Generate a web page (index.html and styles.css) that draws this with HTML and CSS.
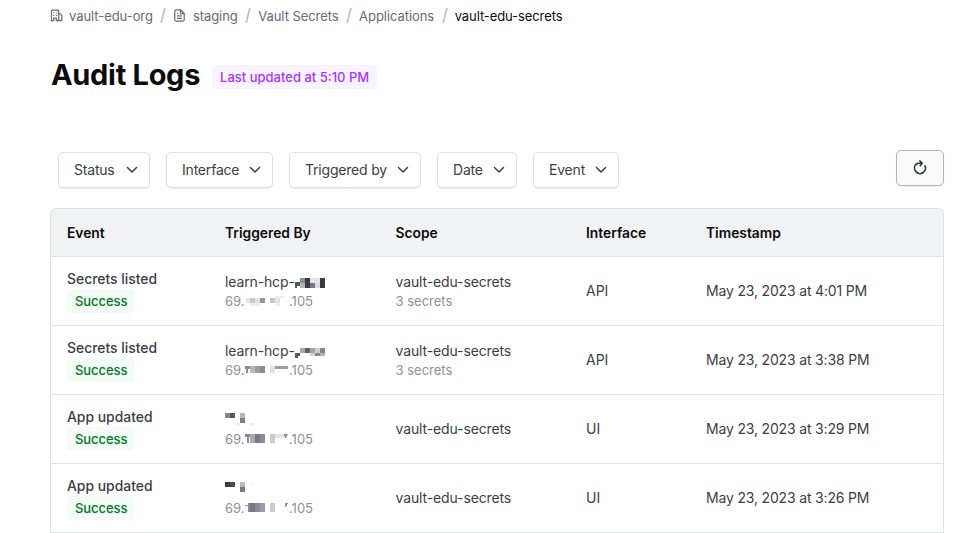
FILE: index.html
```html
<!DOCTYPE html>
<html lang="en">
<head>
<meta charset="utf-8">
<title>Audit Logs</title>
<link rel="stylesheet" href="styles.css">
</head>
<body>
<nav class="crumbs">
  <svg class="crumb-icon" viewBox="0 0 16 16"><path d="M1.8 14.2V2.5Q1.8 1.5 2.8 1.5H9.7Q10.7 1.5 10.7 2.5V14.2M10.7 6H12.5L14.6 8V14.2H10.7M.8 14.2H4.6V11.2H7.8V14.2H10.7M4.5 4V5.2M8 4V5.2M4.5 7.4V8.6M8 7.4V8.6"/></svg>
  <span class="crumb c1">vault-edu-org</span><i class="slash"></i>
  <svg class="crumb-icon" viewBox="0 0 16 16"><path d="M9.5 1.2H3.7Q2.2 1.2 2.2 2.7V13.3Q2.2 14.8 3.7 14.8H12.3Q13.8 14.8 13.8 13.3V5.5ZM9.3 1.5V5.7H13.5M5 5.5H6.5M5 8.5H11M5 11.5H11"/></svg>
  <span class="crumb c2">staging</span><i class="slash"></i>
  <span class="crumb c3">Vault Secrets</span><i class="slash"></i>
  <span class="crumb c4">Applications</span><i class="slash"></i>
  <span class="crumb current">vault-edu-secrets</span>
</nav>
<header class="title"><h1>Audit Logs</h1><span class="badge updated">Last updated at 5:10 PM</span></header>
<div class="toolbar">
  <button class="filter f1">Status<svg viewBox="0 0 12 8"><path d="M1.5 1.5L6 6L10.5 1.5"/></svg></button>
  <button class="filter f2">Interface<svg viewBox="0 0 12 8"><path d="M1.5 1.5L6 6L10.5 1.5"/></svg></button>
  <button class="filter f3">Triggered by<svg viewBox="0 0 12 8"><path d="M1.5 1.5L6 6L10.5 1.5"/></svg></button>
  <button class="filter f4">Date<svg viewBox="0 0 12 8"><path d="M1.5 1.5L6 6L10.5 1.5"/></svg></button>
  <button class="filter f5">Event<svg viewBox="0 0 12 8"><path d="M1.5 1.5L6 6L10.5 1.5"/></svg></button>
  <button class="refresh" aria-label="Refresh"><svg viewBox="0 0 16 16"><path d="M4.1 4.2A5.5 5.5 0 1 0 12.7 5.2M4.1 4.2Q6.2 2.8 9.8 3.2M7.3 .5L10.1 3.2L7.9 6.2"/></svg></button>
</div>
<main class="table">
  <div class="row head"><b>Event</b><b>Triggered By</b><b>Scope</b><b>Interface</b><b>Timestamp</b></div>
  <div class="row">
    <div><p class="event">Secrets listed</p><span class="badge success">Success</span></div>
    <div class="actor"><p class="name">learn-hcp-</p><p class="ip"><span>69.</span><span>.105</span></p>
      <svg class="mosaic m1" viewBox="0 0 110 45"><path fill="#555660" d="M70 17h5v4h-3v2h-2z"/><path fill="#8d8e95" d="M75 13h5v5h-5z"/><path fill="#b5b5bb" d="M75 18h5v5h-5z"/><path fill="#393a44" d="M80 13h5v10h-5zM95 13h5v10h-5z"/><path fill="#e4e4e7" d="M85 13h5v5h-5zM90 13h5v5h-5z"/><path fill="#777880" d="M85 18h5v5h-5z"/><path fill="#dcdce0" d="M90 18h5v5h-5z"/><path fill="#e1e1e6" d="M21 33h5v5h-5zM30 33h5v5h-5zM50 33h5v5h-5z"/><path fill="#c7c7ce" d="M25 33h5v5h-5zM45 33h5v5h-5z"/><path fill="#9697a3" d="M35 33h5v5h-5z"/><path fill="#eeeef2" d="M50 31h10v2h-10zM25 38h10v3h-10zM50 38h5v3h-5z"/></svg></div>
    <div><p class="scope">vault-edu-secrets</p><p class="count">3 secrets</p></div><div class="api">API</div><div class="time">May 23, 2023 at 4:01 PM</div>
  </div>
  <div class="row">
    <div><p class="event">Secrets listed</p><span class="badge success">Success</span></div>
    <div class="actor"><p class="name">learn-hcp-</p><p class="ip"><span>69.</span><span>.105</span></p>
      <svg class="mosaic m2" viewBox="0 0 110 45"><path fill="#565660" d="M70 18h5v3h-2v2h-3z"/><path fill="#a6a7ad" d="M75 13h5v5h-5zM85 13h5v5h-5z"/><path fill="#61626b" d="M80 13h5v5h-5z"/><path fill="#cfcfd5" d="M85 18h5v3h-5zM90 13h5v5h-5z"/><path fill="#86878e" d="M95 13h5v5h-5zM90 18h5v3h-5z"/><path fill="#b4b5bc" d="M95 18h5v3h-5z"/><path fill="#898b98" d="M20 31h5v3h-2v4h-2v-4h-1zM35 31h5v7h-5z"/><path fill="#b6b6c0" d="M25 31h5v7h-5z"/><path fill="#9b9ca7" d="M30 31h5v7h-5zM50 31h13v3h-13z"/><path fill="#dfdfe5" d="M45 31h5v7h-5z"/></svg></div>
    <div><p class="scope">vault-edu-secrets</p><p class="count">3 secrets</p></div><div class="api">API</div><div class="time">May 23, 2023 at 3:38 PM</div>
  </div>
  <div class="row">
    <div><p class="event">App updated</p><span class="badge success">Success</span></div>
    <div class="actor"><p class="name"></p><p class="ip"><span>69.</span><span>.105</span></p>
      <svg class="mosaic m3" viewBox="0 0 110 45"><path fill="#85868e" d="M0 8h5v5h-5z"/><path fill="#555660" d="M5 8h5v5h-5z"/><path fill="#b7b7bd" d="M15 8h5v5h-5z"/><path fill="#7b7c84" d="M15 13h5v5h-5z"/><path fill="#f0f0f3" d="M10 18h5v3h-5zM25 18h5v3h-5z"/><path fill="#898b98" d="M20 29h5v3h-1v6h-2v-6h-2zM35 29h5v9h-5z"/><path fill="#a9aab4" d="M25 29h5v9h-5z"/><path fill="#777987" d="M30 29h5v9h-5z"/><path fill="#cbccd3" d="M45 29h5v9h-5z"/><path fill="#e2e2e7" d="M50 29h10v4h-10z"/><path fill="#8e909c" d="M59 29h4l-2 4h-1z"/></svg></div>
    <div class="scope">vault-edu-secrets</div><div class="api">UI</div><div class="time">May 23, 2023 at 3:29 PM</div>
  </div>
  <div class="row">
    <div><p class="event">App updated</p><span class="badge success">Success</span></div>
    <div class="actor"><p class="name"></p><p class="ip"><span>69.</span><span>.105</span></p>
      <svg class="mosaic m4" viewBox="0 0 110 45"><path fill="#393a44" d="M0 9h5v5h-5z"/><path fill="#484952" d="M5 9h5v5h-5z"/><path fill="#b7b7bd" d="M15 9h5v5h-5z"/><path fill="#777880" d="M15 14h5v5h-5z"/><path fill="#f8f8f9" d="M25 9h5v5h-5z"/><path fill="#898b98" d="M23 30h2v9h-2zM20 32h2l2 -2v3h-4zM30 30h5v9h-5z"/><path fill="#777987" d="M25 30h5v9h-5z"/><path fill="#999ba6" d="M35 30h5v9h-5z"/><path fill="#cbccd3" d="M45 30h5v9h-5z"/><path fill="#8e909c" d="M60 30h3l-2 4h-1z"/></svg></div>
    <div class="scope">vault-edu-secrets</div><div class="api">UI</div><div class="time">May 23, 2023 at 3:26 PM</div>
  </div>
</main>
</body>
</html>
```
FILE: styles.css
```css
* { box-sizing: border-box; }
body { margin: 0; height: 533px; overflow: hidden; background: #fff; font: 14px/20px Inter, "Liberation Sans", sans-serif; color: #3b3d45; }
p, h1 { margin: 0; white-space: nowrap; }
.crumbs { display: flex; align-items: center; height: 31px; padding-left: 50px; font-size: 13px; color: #656a76; white-space: nowrap; }
.crumb-icon { width: 13px; height: 13px; margin-right: 6px; fill: none; stroke: #656a76; stroke-width: 1.5; }
.crumb { letter-spacing: -.06px; }
.c2 { margin-left: .5px; }
.current { color: #0c0c0e; letter-spacing: -.09px; }
.slash { width: 1.5px; height: 15px; margin: 0 9.5px; background: #c2c5cb; transform: skewX(-14deg); }
.title { display: flex; align-items: center; gap: 12px; margin-top: 26px; padding-left: 51px; height: 36px; }
h1 { color: #0c0c0e; font-size: 29px; line-height: 36px; font-weight: 700; letter-spacing: -.3px; }
.badge { display: block; width: max-content; height: 24px; padding: 0 8px; border-radius: 5px; font-size: 13px; line-height: 24px; font-weight: 550; white-space: nowrap; }
.updated { margin-top: 3px; background: #f9f2ff; color: #a737ff; }
.toolbar { display: flex; gap: 16px; height: 58px; margin: 57px 33px 0 58px; }
button { height: 36px; font: inherit; border-radius: 5px; background: #fff; color: #3b3d45; padding: 0; }
.filter { display: flex; align-items: center; justify-content: space-between; margin-top: 2px; padding: 0 11px 0 15px; border: 1px solid #dedfe3; box-shadow: 0 1px 1px #656a7620; letter-spacing: -.2px; white-space: nowrap; }
.filter svg { width: 12px; height: 8px; fill: none; stroke: #3b3d45; stroke-width: 1.5; stroke-linecap: round; stroke-linejoin: round; }
.f1 { width: 92px; } .f2 { width: 107px; } .f3 { width: 132px; } .f4 { width: 80px; } .f5 { width: 86px; }
.refresh { display: flex; align-items: center; justify-content: center; width: 48px; margin-left: auto; border: 1px solid #b2b6bd; background: #fafafa; box-shadow: 0 1px 1px #656a7620; }
.refresh svg { width: 16px; height: 16px; margin-top: -1px; fill: none; stroke: #3b3d45; stroke-width: 1.7; }
.table { width: 894px; margin-left: 50px; border: 1px solid #dedfe3; border-radius: 6px 6px 0 0; border-bottom: 0; }
.row { display: grid; grid-template-columns: 158px 170.5px 190.5px 120px 1fr; align-items: center; height: 69px; border-bottom: 1px solid #dedfe3; }
.row > * { padding-left: 16px; white-space: nowrap; }
.head { height: 48px; background: #f1f2f3; color: #0c0c0e; border-radius: 5px 5px 0 0; }
.head b { font-size: 13.8px; font-weight: 600; line-height: 18px; margin-top: 1px; }
.event { font-weight: 500; font-size: 13.9px; height: 20px; }
.scope, .name { letter-spacing: -.13px; }
.time { letter-spacing: -.17px; }
.success { letter-spacing: -.08px; background: #f2fbf6; color: #00781e; }
.actor { position: relative; }
.name { height: 19px; line-height: 19px; }
.ip { height: 19px; line-height: 20px; }
.ip, .count { font-size: 13px; color: #8c909c; }
.ip { display: flex; justify-content: space-between; width: 88px; }
.count { height: 18px; line-height: 18px; }
.mosaic { position: absolute; left: 16px; top: -7px; width: 110px; height: 45px; shape-rendering: crispEdges; }
.m2, .m4 { top: -6px; }
.m3 { top: -5px; }
```
